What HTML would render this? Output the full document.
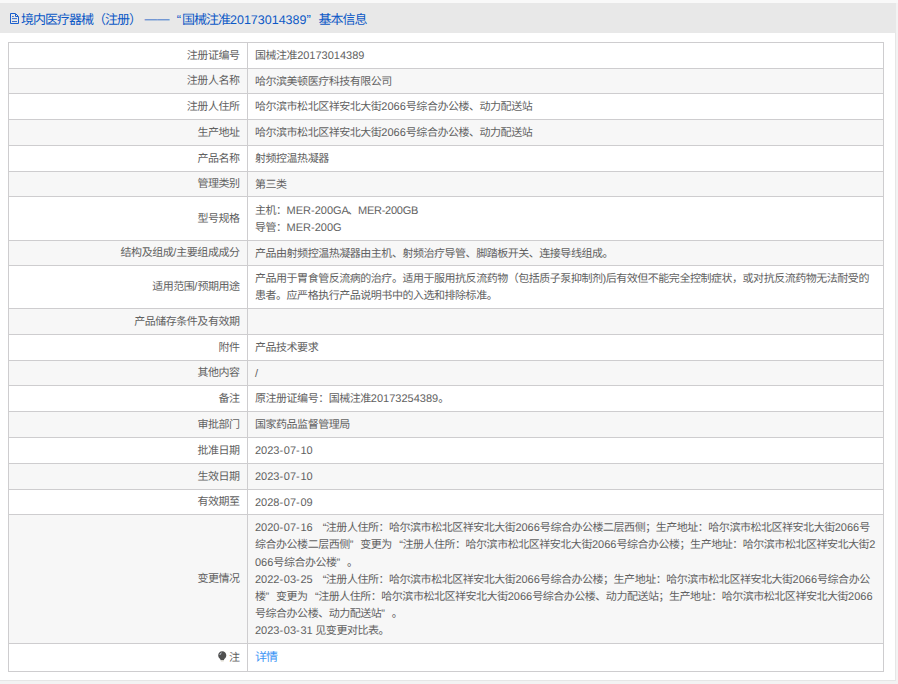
<!DOCTYPE html>
<html lang="zh-CN"><head><meta charset="utf-8">
<style>
html,body{margin:0;padding:0;}
body{width:898px;height:684px;background:#f3f3f3;position:relative;overflow:hidden;font-family:"Liberation Sans",sans-serif;text-rendering:geometricPrecision;color:#616161;}
.panel{position:absolute;left:0;top:3px;width:895px;height:677px;background:#fff;border-right:1px solid #e6e6e6;border-bottom:1px solid #e6e6e6;}
.topstrip{position:absolute;left:0;top:0;width:898px;height:3px;background:#f9f9f9;}
.hd{position:absolute;left:0;top:3px;width:896px;height:30px;background:#e8e8e8;}
.hd .t{position:absolute;left:21px;top:8.5px;font-size:13px;letter-spacing:-1px;line-height:16px;color:#0c58c6;white-space:nowrap;}
.hd i{font-style:normal;font-size:12.5px;letter-spacing:0;}
.hd .ql{width:7px;padding-right:2px;}
.hd .dash{position:relative;top:-1px;}
.hd .qr{width:12px;}
.hd svg{position:absolute;left:9px;top:9px;}
.r{position:absolute;left:8px;width:874px;border:1px solid #cecdcf;border-bottom:none;font-size:11px;letter-spacing:-0.47px;line-height:17.1px;}
.r.g{background:#f7f7f7;}
.r .l{position:absolute;left:0;top:0;bottom:0;width:238px;border-right:1px solid #cecdcf;}
.r .l span{position:absolute;right:7.5px;white-space:nowrap;}
.r .v{position:absolute;left:246px;white-space:nowrap;}
.r i{font-style:normal;letter-spacing:0;}
.r u{text-decoration:none;letter-spacing:0.7px;}
.r a{color:#3b94f5;font-size:12px;letter-spacing:-1px;position:relative;top:-1px;}
.pin{vertical-align:-1px;margin-right:1.5px;}
.ql,.qr{font-weight:normal;display:inline-block;width:10.5px;}
.ql{text-align:right;}
.qr{text-align:left;}
.bot{position:absolute;left:8px;top:671px;width:876px;height:1px;background:#cecdcf;}
</style></head><body>
<div class="topstrip"></div>
<div class="panel"></div>
<div class="hd">
  <svg width="11" height="13" viewBox="0 0 11 13"><path d="M1.5 1.5H6.5L9.5 4.5V11.5H1.5Z" fill="none" stroke="#1a5fcc"/><path d="M6.5 2V4.5H9" fill="none" stroke="#1a5fcc"/><path d="M3 4.5H4.8M3 6.6H8M3 9.5H8" stroke="#3a70d0"/></svg>
  <div class="t">境内医疗器械（注册）<i> <span class="dash">——</span> </i><b class="ql">“</b>国械注准<i>20173014389</i><b class="qr">”</b>基本信息</div>
</div>
<div class="r" style="top:42px;height:25px"><div class="l"><span style="top:4.95px">注册证编号</span></div><div class="v" style="top:5.15px">国械注准<i>20173014389</i></div></div>
<div class="r g" style="top:68px;height:24px"><div class="l"><span style="top:4.45px">注册人名称</span></div><div class="v" style="top:4.65px">哈尔滨美顿医疗科技有限公司</div></div>
<div class="r" style="top:93px;height:25px"><div class="l"><span style="top:4.95px">注册人住所</span></div><div class="v" style="top:5.15px">哈尔滨市松北区祥安北大街<i>2066</i>号综合办公楼、动力配送站</div></div>
<div class="r g" style="top:119px;height:25px"><div class="l"><span style="top:4.95px">生产地址</span></div><div class="v" style="top:5.15px">哈尔滨市松北区祥安北大街<i>2066</i>号综合办公楼、动力配送站</div></div>
<div class="r" style="top:145px;height:25px"><div class="l"><span style="top:4.95px">产品名称</span></div><div class="v" style="top:5.15px">射频控温热凝器</div></div>
<div class="r g" style="top:171px;height:24px"><div class="l"><span style="top:4.45px">管理类别</span></div><div class="v" style="top:4.65px">第三类</div></div>
<div class="r" style="top:196px;height:43px"><div class="l"><span style="top:13.95px">型号规格</span></div><div class="v" style="top:5.60px">主机：<i>MER-200GA</i><span style="margin-left:-1.5px">、</span><i style="letter-spacing:-0.25px">MER-200GB</i><br>导管：<i>MER-200G</i></div></div>
<div class="r g" style="top:240px;height:24px"><div class="l"><span style="top:4.45px">结构及组成<i>/</i>主要组成成分</span></div><div class="v" style="top:4.65px">产品由射频控温热凝器由主机、射频治疗导管、脚踏板开关、连接导线组成。</div></div>
<div class="r" style="top:265px;height:42px"><div class="l"><span style="top:13.45px">适用范围<i>/</i>预期用途</span></div><div class="v" style="top:5.10px">产品用于胃食管反流病的治疗。适用于服用抗反流药物（包括质子泵抑制剂)后有效但不能完全控制症状，或对抗反流药物无法耐受的<br>患者。应严格执行产品说明书中的入选和排除标准。</div></div>
<div class="r g" style="top:308px;height:25px"><div class="l"><span style="top:4.95px">产品储存条件及有效期</span></div><div class="v" style="top:5.15px"></div></div>
<div class="r" style="top:334px;height:25px"><div class="l"><span style="top:4.95px">附件</span></div><div class="v" style="top:5.15px">产品技术要求</div></div>
<div class="r g" style="top:360px;height:24px"><div class="l"><span style="top:4.45px">其他内容</span></div><div class="v" style="top:4.65px"><i>/</i></div></div>
<div class="r" style="top:385px;height:25px"><div class="l"><span style="top:4.95px">备注</span></div><div class="v" style="top:5.15px">原注册证编号：国械注准<i>20173254389</i>。</div></div>
<div class="r g" style="top:411px;height:25px"><div class="l"><span style="top:4.95px">审批部门</span></div><div class="v" style="top:5.15px">国家药品监督管理局</div></div>
<div class="r" style="top:437px;height:25px"><div class="l"><span style="top:4.95px">批准日期</span></div><div class="v" style="top:5.15px"><i>2023<u>-</u>07<u>-</u>10</i></div></div>
<div class="r g" style="top:463px;height:25px"><div class="l"><span style="top:4.95px">生效日期</span></div><div class="v" style="top:5.15px"><i>2023<u>-</u>07<u>-</u>10</i></div></div>
<div class="r" style="top:489px;height:24px"><div class="l"><span style="top:4.45px">有效期至</span></div><div class="v" style="top:4.65px"><i>2028<u>-</u>07<u>-</u>09</i></div></div>
<div class="r g" style="top:514px;height:128px"><div class="l"><span style="top:56.45px">变更情况</span></div><div class="v" style="top:5.35px"><i>2020<u>-</u>07<u>-</u>16</i> <b class="ql">“</b>注册人住所：哈尔滨市松北区祥安北大街<i>2066</i>号综合办公楼二层西侧；生产地址：哈尔滨市松北区祥安北大街<i>2066</i>号<br>综合办公楼二层西侧<b class="qr">”</b>变更为<b class="ql">“</b>注册人住所：哈尔滨市松北区祥安北大街<i>2066</i>号综合办公楼；生产地址：哈尔滨市松北区祥安北大街<i>2</i><br><i>066</i>号综合办公楼<b class="qr">”</b>。<br><i>2022<u>-</u>03<u>-</u>25</i> <b class="ql">“</b>注册人住所：哈尔滨市松北区祥安北大街<i>2066</i>号综合办公楼；生产地址：哈尔滨市松北区祥安北大街<i>2066</i>号综合办公<br>楼<b class="qr">”</b>变更为<b class="ql">“</b>注册人住所：哈尔滨市松北区祥安北大街<i>2066</i>号综合办公楼、动力配送站；生产地址：哈尔滨市松北区祥安北大街<i>2066</i><br>号综合办公楼、动力配送站<b class="qr">”</b>。<br><i>2023<u>-</u>03<u>-</u>31</i> 见变更对比表。</div></div>
<div class="r" style="top:643px;height:27px"><div class="l"><span style="top:5.95px"><svg class="pin" width="9" height="11" viewBox="0 0 9 11"><path d="M4.3 .2C1.9.2.2 2 .2 4.2c0 1.5.7 2.5 1.5 3.3.5.6.8 1 .9 1.7h3.3c.1-.7.4-1.1.9-1.7.8-.8 1.5-1.8 1.5-3.3C8.3 2 6.6.2 4.3.2z" fill="#505050"/><path d="M1.9 4A2.4 2.4 0 0 1 3.6 1.9" fill="none" stroke="#cfd8e8" stroke-width=".9"/><path d="M2.9 10h2.8" stroke="#e0dcd0" stroke-width="1.1"/></svg>注</span></div><div class="v" style="top:5.95px"><a>详情</a></div></div>
<div class="bot"></div>
</body></html>
